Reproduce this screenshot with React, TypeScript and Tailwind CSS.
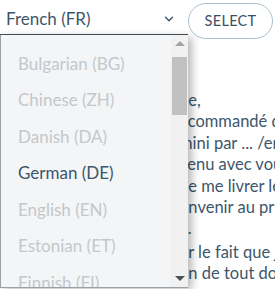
import { ChevronDown } from "lucide-react"

const LANGS = [
  { label: "Bulgarian (BG)", active: false },
  { label: "Chinese (ZH)", active: false },
  { label: "Danish (DA)", active: false },
  { label: "German (DE)", active: true },
  { label: "English (EN)", active: false },
  { label: "Estonian (ET)", active: false },
  { label: "Finnish (FI)", active: false },
]

const LINES = [
  { text: "ne,", gap: false },
  { text: "ecommandé d", gap: false },
  { text: "mini par ... /env", gap: false },
  { text: "venu avec vou", gap: false },
  { text: "de me livrer le", gap: false },
  { text: "onvenir au pr", gap: false },
  { text: "e.", gap: false },
  { text: "ur le fait que j", gap: true },
  { text: "on de tout dor", gap: false },
]

export default function App() {
  return (
    <div className="relative h-[289px] w-[275px] overflow-hidden bg-white font-['Lato',sans-serif] text-[#3d566b]">
      <div className="flex items-start pt-[3px]">
        <div className="flex h-[32px] w-[188px] items-center justify-between border-b border-[#4a4f55] pl-[6px] pr-[12px]">
          <span className="text-[17px]">French (FR)</span>
          <ChevronDown className="h-[14px] w-[14px]" strokeWidth={2.5} />
        </div>
        <button
          type="button"
          className="h-[36px] w-[85px] rounded-full border border-[#a9bfcb] text-[14.5px] tracking-[0.3px] text-[#3b5163]"
        >
          SELECT
        </button>
      </div>

      <div className="pl-[179px] pt-[51px] text-[16.5px] leading-[21.4px]">
        {LINES.map((line) => (
          <p key={line.text} className={line.gap ? "mt-[2px] whitespace-nowrap" : "whitespace-nowrap"}>
            {line.text}
          </p>
        ))}
      </div>

      <div className="absolute left-0 top-[35px] flex h-[253px] w-[188px] border-l border-b border-[#9aa0a6] bg-[#f4f5f7] shadow-[4px_2px_8px_rgba(0,0,0,0.28)]">
        <ul className="flex-1 overflow-hidden pt-[10px]">
          {LANGS.map((lang) => (
            <li
              key={lang.label}
              className={
                lang.active
                  ? "flex h-[36.5px] items-center pl-[17px] text-[17px] text-[#3d566b]"
                  : "flex h-[36.5px] items-center pl-[17px] text-[17px] text-[#c3c8cb]"
              }
            >
              {lang.label}
            </li>
          ))}
        </ul>
        <div className="flex w-[17px] flex-col items-center bg-[#f1f1f1]">
          <div className="flex h-[17px] w-full items-center justify-center">
            <div className="h-0 w-0 border-x-[5px] border-b-[5px] border-x-transparent border-b-[#a3a3a3]" />
          </div>
          <div className="mt-[5px] h-[58px] w-[15px] bg-[#c1c1c1]" />
          <div className="flex-1" />
          <div className="flex h-[17px] w-full items-center justify-center">
            <div className="h-0 w-0 border-x-[5px] border-t-[5px] border-x-transparent border-t-[#505050]" />
          </div>
        </div>
      </div>
    </div>
  )
}
